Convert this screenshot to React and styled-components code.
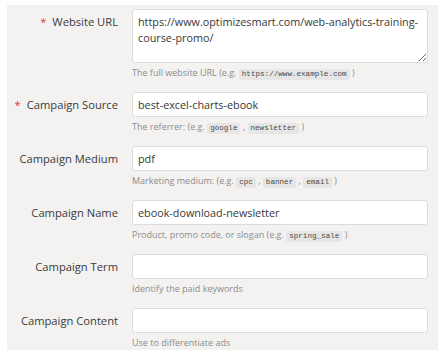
import React from "react";
import styled, { createGlobalStyle } from "styled-components";

const GlobalStyle = createGlobalStyle`
  html, body {
    margin: 0;
    padding: 0;
    background: #fff;
  }
  body {
    font-family: "Open Sans", "Liberation Sans", sans-serif;
  }
`;

const fields = [
  {
    label: "Website URL",
    required: true,
    multiline: true,
    value: "https://www.optimizesmart.com/web-analytics-training-course-promo/",
    help: ["The full website URL (e.g. ", { code: "https://www.example.com" }, " )"],
  },
  {
    label: "Campaign Source",
    required: true,
    value: "best-excel-charts-ebook",
    help: ["The referrer: (e.g. ", { code: "google" }, " , ", { code: "newsletter" }, " )"],
  },
  {
    label: "Campaign Medium",
    value: "pdf",
    help: [
      "Marketing medium: (e.g. ",
      { code: "cpc" },
      " , ",
      { code: "banner" },
      " , ",
      { code: "email" },
      " )",
    ],
  },
  {
    label: "Campaign Name",
    value: "ebook-download-newsletter",
    help: ["Product, promo code, or slogan (e.g. ", { code: "spring_sale" }, " )"],
  },
  {
    label: "Campaign Term",
    value: "",
    help: ["Identify the paid keywords"],
  },
  {
    label: "Campaign Content",
    value: "",
    help: ["Use to differentiate ads"],
  },
];

const App = () => {
  return (
    <>
      <GlobalStyle />
      <Panel>
        {fields.map((f) => (
          <Row key={f.label}>
            <Label>
              {f.required && <Star>*</Star>}
              {f.label}
            </Label>
            <Control>
              {f.multiline ? (
                <TextArea defaultValue={f.value} />
              ) : (
                <Input type="text" defaultValue={f.value} />
              )}
              <Help>
                {f.help.map((part, i) =>
                  typeof part === "string" ? (
                    <span key={i}>{part}</span>
                  ) : (
                    <Code key={i}>{part.code}</Code>
                  )
                )}
              </Help>
            </Control>
          </Row>
        ))}
      </Panel>
    </>
  );
};

const Panel = styled.div`
  margin: 5px 5px 0 7px;
  height: 345px;
  box-sizing: border-box;
  background: #f3f2f1;
  padding: 4px 10px 0 0;
  display: flex;
  flex-direction: column;
  gap: 12px;
`;

const Row = styled.div`
  display: grid;
  grid-template-columns: 111px 1fr;
  column-gap: 14px;
  align-items: start;
`;

const Label = styled.label`
  text-align: right;
  font-size: 11.2px;
  line-height: 25px;
  color: #3a3a3a;
  white-space: nowrap;
`;

const Star = styled.span`
  color: #e0393e;
  margin-right: 6px;
`;

const Control = styled.div`
  display: flex;
  flex-direction: column;
`;

const fieldBase = `
  box-sizing: border-box;
  width: 100%;
  border: 1px solid #dcdcdc;
  border-radius: 3px;
  background: #fff;
  font-family: "Open Sans", "Liberation Sans", sans-serif;
  font-size: 10.8px;
  color: #383838;
  padding: 0 5px;
  margin: 0;
  outline: none;
`;

const Input = styled.input`
  ${fieldBase}
  height: 25px;
`;

const TextArea = styled.textarea`
  ${fieldBase}
  height: 54px;
  padding-top: 4px;
  line-height: 16px;
  resize: vertical;
`;

const Help = styled.div`
  margin-top: 3px;
  height: 14px;
  font-size: 9px;
  line-height: 14px;
  color: #8c8c8c;
  white-space: nowrap;
`;

const Code = styled.code`
  display: inline-block;
  font-family: "Liberation Mono", "DejaVu Sans Mono", monospace;
  font-size: 7.6px;
  line-height: 11px;
  color: #4a4a4a;
  background: #e6e6e6;
  border-radius: 2px;
  padding: 0 3px;
  vertical-align: 0;
`;

export default App;
